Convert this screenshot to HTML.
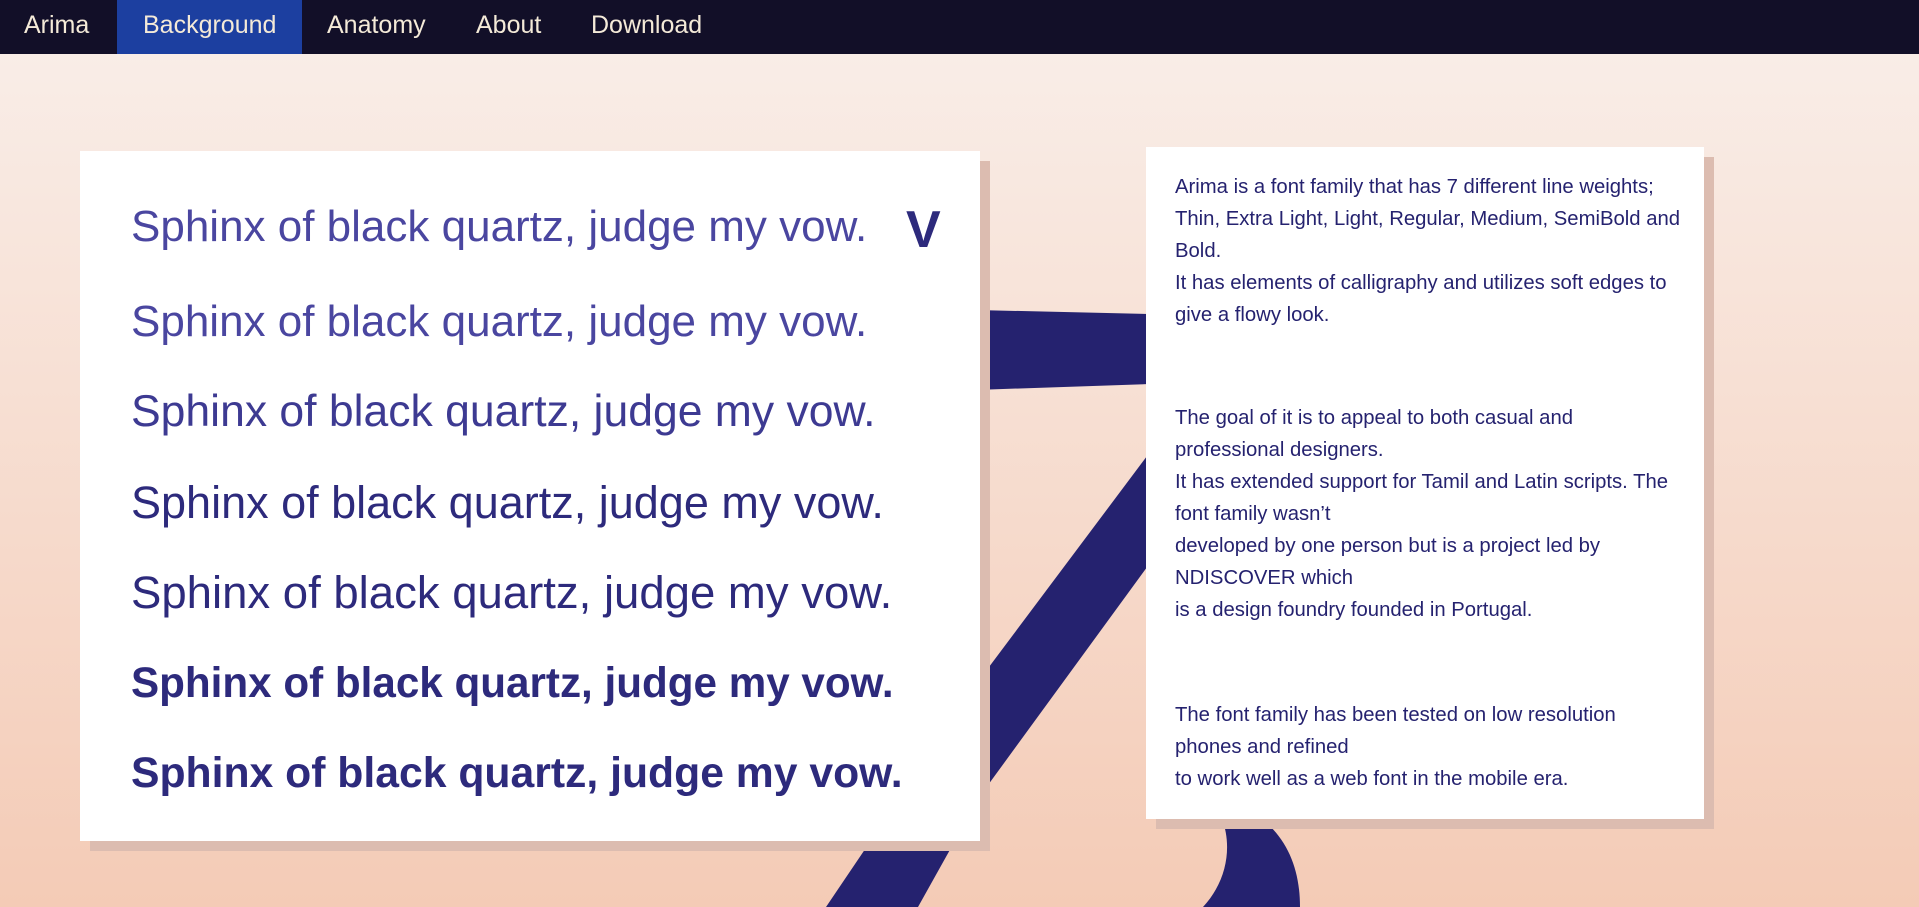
<!DOCTYPE html>
<html><head><meta charset="utf-8"><style>
*{margin:0;padding:0;box-sizing:border-box}
body{width:1919px;height:907px;overflow:hidden;position:relative;font-family:"Liberation Sans",sans-serif;background:linear-gradient(#f9ede7 54px,#f4cbb6 907px);color:#25226f}
nav{position:absolute;left:0;top:0;width:1919px;height:54px;background:#120f28}
nav a{position:absolute;top:0;height:54px;line-height:50px;color:#f4ead8;font-size:25px;text-decoration:none}
nav a.act{background:#1c3fa0}
svg{position:absolute;left:0;top:0}
.card{position:absolute;background:#fff;box-shadow:10px 10px 0 #dcbcb0}
.l{position:absolute;left:131px;font-size:44px;white-space:nowrap;color:#2d2a7c}
.r{position:absolute;left:1175px;font-size:20.3px;line-height:32px;color:#25226f;white-space:nowrap}
</style></head><body>
<nav>
<a style="left:24px">Arima</a>
<a class="act" style="left:117px;width:185px;padding-left:26px">Background</a>
<a style="left:327px">Anatomy</a>
<a style="left:476px">About</a>
<a style="left:591px">Download</a>
</nav>
<svg width="1919" height="907">
<polygon fill="#25226f" points="975,310 1150,314 1150,384 975,390"/>
<polygon fill="#25226f" points="1150,452 980,679 826,907 918,907 980,796 1150,563"/>
<path fill="#25226f" d="M1222,819 C1232,845 1228,880 1203,907 L1300,907 C1300,870 1288,840 1262,819 Z"/>
</svg>
<div class="card" style="left:80px;top:151px;width:900px;height:690px"></div>
<div class="card" style="left:1146px;top:147px;width:558px;height:672px"></div>
<div class="l" style="top:202px;color:#4a46a0">Sphinx of black quartz, judge my vow.</div>
<div style="position:absolute;left:906px;top:200px;font-size:52px;font-weight:bold;color:#2d2a7c">V</div>
<div class="l" style="top:297px;color:#4a46a0">Sphinx of black quartz, judge my vow.</div>
<div class="l" style="top:387px;color:#3d3a92;font-size:44.5px">Sphinx of black quartz, judge my vow.</div>
<div class="l" style="top:477px;font-size:45px">Sphinx of black quartz, judge my vow.</div>
<div class="l" style="top:567px;font-size:45.5px">Sphinx of black quartz, judge my vow.</div>
<div class="l" style="top:659px;font-weight:bold;font-size:42.2px">Sphinx of black quartz, judge my vow.</div>
<div class="l" style="top:749px;font-weight:bold;font-size:42.7px">Sphinx of black quartz, judge my vow.</div>
<div class="r" style="top:171px">Arima is a font family that has 7 different line weights;<br>Thin, Extra Light, Light, Regular, Medium, SemiBold and<br>Bold.<br>It has elements of calligraphy and utilizes soft edges to<br>give a flowy look.</div>
<div class="r" style="top:402px">The goal of it is to appeal to both casual and<br>professional designers.<br>It has extended support for Tamil and Latin scripts. The<br>font family wasn’t<br>developed by one person but is a project led by<br>NDISCOVER which<br>is a design foundry founded in Portugal.</div>
<div class="r" style="top:699px">The font family has been tested on low resolution<br>phones and refined<br>to work well as a web font in the mobile era.</div>
</body></html>
